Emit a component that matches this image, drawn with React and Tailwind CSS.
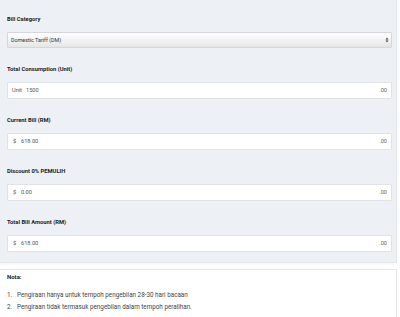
const fields = [
  { label: 'Total Consumption (Unit)', prefix: 'Unit', value: '1500' },
  { label: 'Current Bill (RM)', prefix: '$', value: '618.00' },
  { label: 'Discount 0% PEMULIH', prefix: '$', value: '0.00' },
  { label: 'Total Bill Amount (RM)', prefix: '$', value: '618.00' },
];

const Field = ({ label, prefix, value }) => (
  <div className="mt-[17px]">
    <div className="h-[8px] mb-[9px] text-[5.8px] leading-[8px] font-bold text-[#222]">{label}</div>
    <div className="h-[17px] flex items-center bg-white border border-[#dfe3e8] rounded-[1px] text-[5.6px] text-[#555]">
      <span className="pl-[2px] text-center shrink-0" style={{ width: prefix === 'Unit' ? 16 : 11 }}>{prefix}</span>
      <span className="flex-1 pl-[2px]">{value}</span>
      <span className="pr-[4px] text-[#666]">.00</span>
    </div>
  </div>
);

export default function App() {
  return (
    <div className="w-[400px] h-[317px] bg-white overflow-hidden" style={{ fontFamily: 'Roboto, "Liberation Sans", sans-serif' }}>
      <div className="w-[397px] bg-[#edf1f6] border-r border-b border-[#e2e7ed] pl-[7px] pr-[4px] pt-[15px] pb-[10px] shadow-[0_1px_3px_rgba(0,0,0,0.05)]">
        <div className="h-[8px] mb-[9px] text-[5.8px] leading-[8px] font-bold text-[#222]">Bill Category</div>
        <div className="h-[16px] flex items-center justify-between border border-[#d4d8dd] rounded-[1px] bg-gradient-to-b from-white to-[#e6e6e6] text-[5.4px] text-[#333]">
          <span className="pl-[3px]">Domestic Tariff (DM)</span>
          <span className="pr-[2px] flex flex-col items-center leading-none text-[#333]">
            <svg width="4" height="6" viewBox="0 0 4 6"><path d="M0.5 2.4 L2 0.8 L3.5 2.4 Z M0.5 3.6 L2 5.2 L3.5 3.6 Z" fill="#333" /></svg>
          </span>
        </div>
        {fields.map((f) => (
          <Field key={f.label} {...f} />
        ))}
      </div>
      <div className="mt-[6px] w-[397px] h-[60px] bg-white border border-l-0 border-[#e3e6ea] pl-[7px] pt-[3px] text-[#333]">
        <div className="text-[6px] font-bold leading-[8px] text-[#222]">Nota:</div>
        <div className="mt-[8px] text-[6.3px] leading-[12px] text-[#444]">
          <div className="flex"><span className="w-[10px]">1.</span>Pengiraan hanya untuk tempoh pengebilan 28-30 hari bacaan</div>
          <div className="flex"><span className="w-[10px]">2.</span>Pengiraan tidak termasuk pengebilan dalam tempoh peralihan.</div>
        </div>
      </div>
    </div>
  );
}
